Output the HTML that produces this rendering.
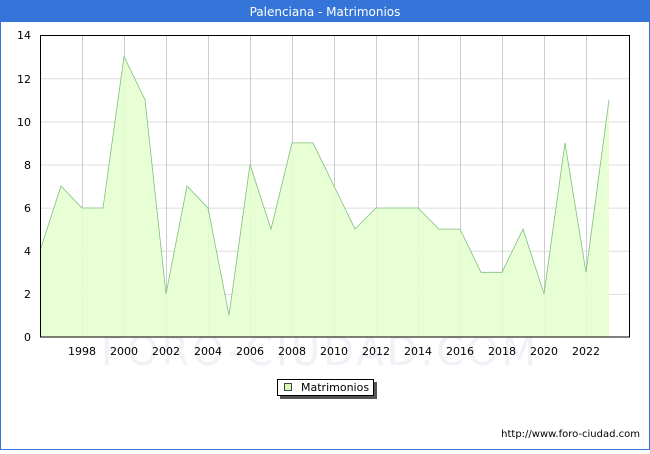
<!DOCTYPE html>
<html><head><style>
body{margin:0;width:650px;height:450px;overflow:hidden;font-family:"DejaVu Sans","Liberation Sans",sans-serif;}
</style></head><body>
<svg width="650" height="450" xmlns="http://www.w3.org/2000/svg" font-family="DejaVu Sans, Liberation Sans, sans-serif">
<rect x="0.5" y="0.5" width="649" height="449" fill="#fff" stroke="#3575d9"/>
<rect x="0" y="0" width="650" height="22" fill="#3575d9"/>
<text x="325" y="16" fill="#fff" font-size="12" text-anchor="middle">Palenciana - Matrimonios</text>
<text x="320" y="365" fill="#f0f2f8" font-size="40" text-anchor="middle" letter-spacing="3">FORO-CIUDAD.COM</text>
<g stroke="#ddd" stroke-width="1">
<line x1="40" y1="294.4" x2="630" y2="294.4"/><line x1="40" y1="251.3" x2="630" y2="251.3"/><line x1="40" y1="208.1" x2="630" y2="208.1"/><line x1="40" y1="165" x2="630" y2="165"/><line x1="40" y1="121.9" x2="630" y2="121.9"/><line x1="40" y1="78.7" x2="630" y2="78.7"/>
</g>
<g stroke="#ccc" stroke-width="1">
<line x1="82.5" y1="35" x2="82.5" y2="337"/><line x1="124.5" y1="35" x2="124.5" y2="337"/><line x1="166.5" y1="35" x2="166.5" y2="337"/><line x1="208.5" y1="35" x2="208.5" y2="337"/><line x1="250.5" y1="35" x2="250.5" y2="337"/><line x1="292.5" y1="35" x2="292.5" y2="337"/><line x1="334.5" y1="35" x2="334.5" y2="337"/><line x1="376.5" y1="35" x2="376.5" y2="337"/><line x1="418.5" y1="35" x2="418.5" y2="337"/><line x1="460.5" y1="35" x2="460.5" y2="337"/><line x1="502.5" y1="35" x2="502.5" y2="337"/><line x1="544.5" y1="35" x2="544.5" y2="337"/><line x1="586.5" y1="35" x2="586.5" y2="337"/>
</g>
<polygon fill="#e6ffd0" fill-opacity="0.9" points="40,337 40,250.7 61,186 82,208 103,208 124,56.6 145,99.7 166,293.9 187,186 208,208 229,315.4 250,164.4 271,229.1 292,142.9 313,142.9 334,186 355,229.1 376,208 397,208 418,208 439,229.1 460,229.1 481,272.3 502,272.3 523,229.1 544,293.9 565,142.9 586,272.3 609,99.7 609,337"/>
<polyline fill="none" stroke="#7ec07e" stroke-width="0.8" points="40,250.7 61,186 82,208 103,208 124,56.6 145,99.7 166,293.9 187,186 208,208 229,315.4 250,164.4 271,229.1 292,142.9 313,142.9 334,186 355,229.1 376,208 397,208 418,208 439,229.1 460,229.1 481,272.3 502,272.3 523,229.1 544,293.9 565,142.9 586,272.3 609,99.7"/>
<rect x="40.5" y="35.5" width="589" height="301.5" fill="none" stroke="#000"/>
<g font-size="11" fill="#000" text-anchor="end">
<text x="31" y="341">0</text><text x="31" y="298">2</text><text x="31" y="255">4</text><text x="31" y="212">6</text><text x="31" y="169">8</text><text x="31" y="126">10</text><text x="31" y="83">12</text><text x="31" y="39">14</text>
</g>
<g font-size="11" fill="#000" text-anchor="middle">
<text x="82" y="355">1998</text><text x="124" y="355">2000</text><text x="166" y="355">2002</text><text x="208" y="355">2004</text><text x="250" y="355">2006</text><text x="292" y="355">2008</text><text x="334" y="355">2010</text><text x="376" y="355">2012</text><text x="418" y="355">2014</text><text x="460" y="355">2016</text><text x="502" y="355">2018</text><text x="544" y="355">2020</text><text x="586" y="355">2022</text>
</g>
<rect x="280" y="382" width="97" height="17" fill="#555"/>
<rect x="277.5" y="379.5" width="96" height="16" fill="#fff" stroke="#000"/>
<rect x="284.5" y="383.5" width="7" height="7" fill="#d8f8b8" stroke="#444"/>
<text x="301" y="391" font-size="11">Matrimonios</text>
<text x="640" y="437" font-size="10" text-anchor="end">http://www.foro-ciudad.com</text>
</svg>
</body></html>
